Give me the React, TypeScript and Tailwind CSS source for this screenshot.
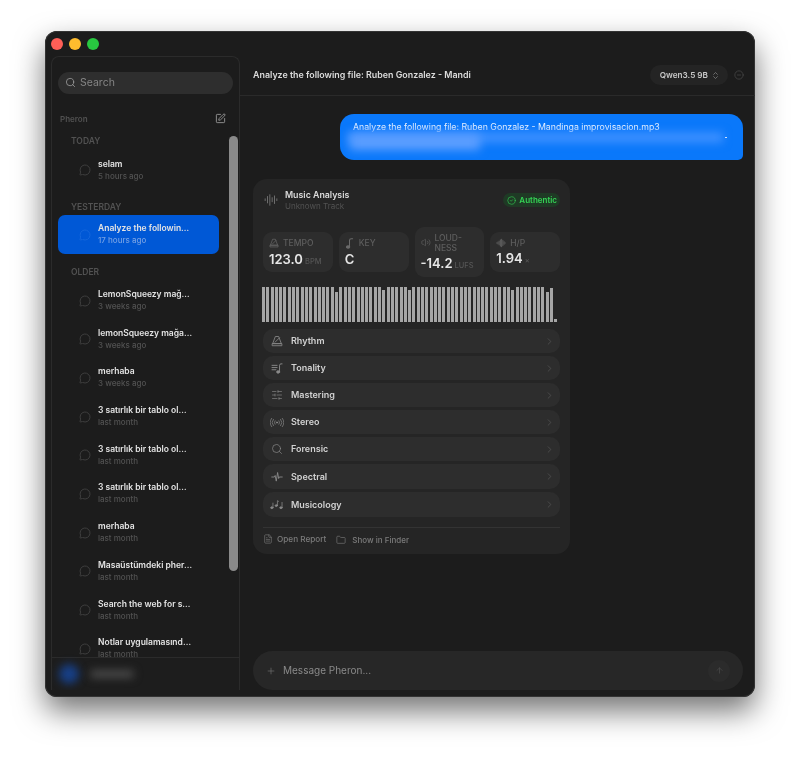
import { ArrowUp, AudioLines, ChevronRight, ChevronsUpDown, CircleCheck, CircleMinus, FileText, Folder, MessageCircle, Plus, Search, SlidersHorizontal, SquarePen, Volume2 } from "lucide-react"
import type { ReactNode } from "react"

const font = { fontFamily: 'Inter, "Noto Sans", sans-serif' }

type Chat = { title: string; time: string; active?: boolean }

const today: Chat[] = [{ title: "selam", time: "5 hours ago" }]
const yesterday: Chat[] = [{ title: "Analyze the followin…", time: "17 hours ago", active: true }]
const older: Chat[] = [
  { title: "LemonSqueezy mağ…", time: "3 weeks ago" },
  { title: "lemonSqueezy mağa…", time: "3 weeks ago" },
  { title: "merhaba", time: "3 weeks ago" },
  { title: "3 satırlık bir tablo ol…", time: "last month" },
  { title: "3 satırlık bir tablo ol…", time: "last month" },
  { title: "3 satırlık bir tablo ol…", time: "last month" },
  { title: "merhaba", time: "last month" },
  { title: "Masaüstümdeki pher…", time: "last month" },
  { title: "Search the web for s…", time: "last month" },
  { title: "Notlar uygulamasınd…", time: "last month" },
]

const dips: Record<number, number> = { 17: 30, 28: 32, 34: 32, 58: 32, 66: 30, 67: 34, 68: 3 }
const bars = Array.from({ length: 69 }, (_, i) => dips[i] ?? 35)

function Metronome() {
  return (
    <svg viewBox="0 0 16 16" className="h-[12px] w-[12px]" fill="none" stroke="currentColor" strokeWidth="1.1" strokeLinejoin="round">
      <path d="M5.8 2h4.4l3.6 9.5H2.2z" />
      <path d="M1.5 11.5h13v2.8h-13z" />
      <path d="M5 10l6.5-6.5" />
    </svg>
  )
}

function Tonality() {
  return (
    <svg viewBox="0 0 16 14" className="h-[11px] w-[13px]" fill="none" stroke="currentColor" strokeWidth="1.2" strokeLinecap="round">
      <path d="M1 3h6.5M1 5.8h6.5M1 8.6h5" />
      <ellipse cx="8.8" cy="11.4" rx="1.9" ry="1.5" fill="currentColor" />
      <path d="M10.6 11V2.8c0-1 .8-1.7 1.8-1.7h1.4" />
    </svg>
  )
}

function Stereo() {
  return (
    <svg viewBox="0 0 20 14" className="h-[11px] w-[14px]" fill="none" stroke="currentColor" strokeWidth="1" strokeLinecap="round">
      <circle cx="10" cy="7" r="0.9" fill="currentColor" />
      <path d="M7.2 4.5a4 4 0 0 0 0 5M12.8 4.5a4 4 0 0 1 0 5" />
      <path d="M4.8 2.5a7 7 0 0 0 0 9M15.2 2.5a7 7 0 0 1 0 9" />
      <path d="M2.4 1a10 10 0 0 0 0 12M17.6 1a10 10 0 0 1 0 12" />
    </svg>
  )
}

function Spike() {
  return (
    <svg viewBox="0 0 16 16" className="h-[12px] w-[12px]" fill="none" stroke="currentColor" strokeWidth="1.2" strokeLinecap="round" strokeLinejoin="round">
      <path d="M1 8h3.5l1-2 1.5 7.5L8.8 2l1.4 8 .8-2H15" />
    </svg>
  )
}

function Notes() {
  return (
    <svg viewBox="0 0 20 14" className="h-[11px] w-[14px]" fill="none" stroke="currentColor" strokeWidth="1.1" strokeLinecap="round">
      <ellipse cx="2.6" cy="11.6" rx="1.7" ry="1.3" fill="currentColor" />
      <path d="M4.2 11.4V5" />
      <ellipse cx="9" cy="8.6" rx="1.7" ry="1.3" fill="currentColor" />
      <path d="M10.6 8.4V1.5l1.6 1" />
      <ellipse cx="15.6" cy="11.6" rx="1.7" ry="1.3" fill="currentColor" />
      <path d="M17.2 11.4V4" />
    </svg>
  )
}

function KeyNote() {
  return (
    <svg viewBox="0 0 10 14" className="h-[11px] w-[9px]" fill="none" stroke="currentColor" strokeWidth="1.3" strokeLinecap="round">
      <ellipse cx="3.2" cy="11.4" rx="2.1" ry="1.6" fill="currentColor" />
      <path d="M5 11V3.2c0-1.3.9-2.2 2.2-2.2H9" />
    </svg>
  )
}

function Blob() {
  return (
    <svg viewBox="0 0 16 14" className="h-[10px] w-[12px]" fill="none" stroke="currentColor" strokeWidth="1.3" strokeLinecap="round">
      <path d="M1 7h0M3 5.5v3M5 4v6M7 2v10M9 1v12M11 3v8M13 5v4M15 7h0" />
    </svg>
  )
}

const rows: { label: string; icon: ReactNode; tall?: boolean }[] = [
  { label: "Rhythm", icon: <Metronome /> },
  { label: "Tonality", icon: <Tonality /> },
  { label: "Mastering", icon: <SlidersHorizontal className="h-[12px] w-[12px]" strokeWidth={1.3} /> },
  { label: "Stereo", icon: <Stereo /> },
  { label: "Forensic", icon: <Search className="h-[12px] w-[12px]" strokeWidth={1.4} /> },
  { label: "Spectral", icon: <Spike />, tall: true },
  { label: "Musicology", icon: <Notes />, tall: true },
]

function ChatItem({ chat }: { chat: Chat }) {
  return (
    <div className={`flex w-[161px] shrink-0 items-center gap-[7px] rounded-[7px] pl-[21px] ${chat.active ? "h-[39px] bg-[#0058d6]" : "h-[38.7px]"}`}>
      <MessageCircle className={`mt-[1px] h-[12px] w-[12px] shrink-0 ${chat.active ? "text-[#1f70e0]" : "text-[#505050]"}`} strokeWidth={1.3} />
      <div className="min-w-0 whitespace-nowrap">
        <div className="text-[8.5px] leading-[12px] font-semibold text-[#e4e4e4]">{chat.title}</div>
        <div className={`text-[8px] leading-[12px] font-medium ${chat.active ? "text-[#74a0e4]" : "text-[#525252]"}`}>{chat.time}</div>
      </div>
    </div>
  )
}

function SectionLabel({ text }: { text: string }) {
  return <div className="flex h-[14px] shrink-0 items-center pl-[13px] text-[8.5px] font-semibold text-[#525252]">{text}</div>
}

function Sidebar() {
  return (
    <div className="flex w-[195px] shrink-0 flex-col pl-[6px]">
      <div className="flex h-[25px] shrink-0 items-center gap-[6px]">
        <span className="h-[12px] w-[12px] rounded-full bg-[#ff5f57]" />
        <span className="h-[12px] w-[12px] rounded-full bg-[#febc2e]" />
        <span className="h-[12px] w-[12px] rounded-full bg-[#28c840]" />
      </div>
      <div className="relative mb-[7px] flex min-h-0 flex-1 flex-col overflow-hidden rounded-t-[8px] border border-b-0 border-[#2b2b2b] bg-[#1c1c1c]">
        <div className="mx-[6px] mt-[14.5px] flex h-[22px] shrink-0 items-center gap-[4px] rounded-full bg-[#2e2e2e] pl-[7px]">
          <Search className="h-[11px] w-[11px] text-[#a8a8a8]" strokeWidth={1.6} />
          <span className="text-[10.5px] text-[#858585]">Search</span>
        </div>
        <div className="mt-[18px] flex h-[14px] shrink-0 items-center justify-between pr-[13px] pl-[8px]">
          <span className="text-[8px] font-semibold text-[#525252]">Pheron</span>
          <SquarePen className="h-[11px] w-[11px] text-[#bdbdbd]" strokeWidth={1.5} />
        </div>
        <div className="mt-[9px] flex min-h-0 flex-1 flex-col overflow-hidden pl-[6px]">
          <SectionLabel text="TODAY" />
          <div className="mt-[2px]"><ChatItem chat={today[0]} /></div>
          <div className="mt-[11.5px]"><SectionLabel text="YESTERDAY" /></div>
          <ChatItem chat={yesterday[0]} />
          <div className="mt-[12px]"><SectionLabel text="OLDER" /></div>
          <div className="mt-[1px] flex flex-col">
            {older.map((chat, i) => (
              <ChatItem key={i} chat={chat} />
            ))}
          </div>
        </div>
        <div className="flex h-[33px] shrink-0 items-center border-t border-[#2b2b2b] bg-[#1d1d1d] pl-[7px]">
          <span className="h-[20px] w-[20px] rounded-full bg-[#173f86] blur-[4px]" />
          <span className="ml-[11px] h-[8px] w-[44px] rounded bg-[#4a4a4a] blur-[4px]" />
        </div>
        <div className="absolute top-[79px] right-[1px] h-[435px] w-[9px] rounded-full bg-[#8a8a8a]" />
      </div>
    </div>
  )
}

function Stat({ icon, label, value, unit, tall }: { icon: ReactNode; label: ReactNode; value: string; unit: string; tall?: boolean }) {
  return (
    <div className={`flex flex-col justify-center rounded-[9px] bg-[#2d2d2d] pl-[6px] ${tall ? "h-[50px]" : "h-[40px]"}`}>
      <div className="flex items-center gap-[4px] text-[#5e5e5e]">
        <span className="flex w-[10px] justify-center text-[#6a6a6a]">{icon}</span>
        <span className="text-[8.5px] leading-[10px] font-medium">{label}</span>
      </div>
      <div className="mt-[2px] flex items-baseline gap-[2px] whitespace-nowrap">
        <span className="text-[13px] leading-[16px] font-semibold text-[#e6e6e6]">{value}</span>
        <span className="text-[7.5px] font-medium text-[#555555]">{unit}</span>
      </div>
    </div>
  )
}

function AnalysisCard() {
  return (
    <div className="mt-[19px] flex h-[375px] w-[317px] flex-col rounded-[14px] bg-[#252525] px-[10px] pt-[9px]">
      <div className="flex h-[24px] items-center justify-between">
        <div className="flex items-center gap-[7px] pl-[1px]">
          <AudioLines className="h-[14px] w-[14px] text-[#8c8c8c]" strokeWidth={1.2} />
          <div>
            <div className="text-[8.8px] leading-[12px] font-semibold text-[#dcdcdc]">Music Analysis</div>
            <div className="text-[8px] leading-[11px] text-[#525252]">Unknown Track</div>
          </div>
        </div>
        <div className="flex h-[14px] items-center gap-[3px] rounded-full bg-[#1f3a25] pr-[3px] pl-[4px] text-[#35d455]">
          <CircleCheck className="h-[9px] w-[9px]" strokeWidth={1.6} />
          <span className="text-[8px] font-semibold">Authentic</span>
        </div>
      </div>
      <div className="mt-[15px] grid h-[50px] grid-cols-4 items-center gap-[6px]">
        <Stat icon={<Metronome />} label="TEMPO" value="123.0" unit="BPM" />
        <Stat icon={<KeyNote />} label="KEY" value="C" unit="" />
        <Stat icon={<Volume2 className="h-[11px] w-[11px]" strokeWidth={1.4} />} label={<>LOUD-<br />NESS</>} value="-14.2" unit="LUFS" tall />
        <Stat icon={<Blob />} label="H/P" value="1.94" unit="×" />
      </div>
      <div className="mt-[10px] -ml-[1px] flex h-[35px] items-end gap-[1.3px]">
        {bars.map((h, i) => (
          <span key={i} className="w-[3px] shrink-0 bg-[#a6a6a6]" style={{ height: h }} />
        ))}
      </div>
      <div className="mt-[7px] flex flex-col gap-[3px]">
        {rows.map((r) => (
          <div key={r.label} className={`flex items-center rounded-[10px] bg-[#2d2d2d] pr-[5px] pl-[7px] ${r.tall ? "h-[25px]" : "h-[24px]"}`}>
            <span className="flex w-[14px] justify-center text-[#8a8a8a]">{r.icon}</span>
            <span className="ml-[7px] flex-1 text-[9px] font-semibold text-[#d2d2d2]">{r.label}</span>
            <ChevronRight className="h-[11px] w-[11px] text-[#555555]" strokeWidth={1.6} />
          </div>
        ))}
      </div>
      <div className="mt-[10px] flex h-[24px] items-center gap-[10px] border-t border-[#333333] text-[#7c7c7c]">
        <div className="flex items-center gap-[4px]">
          <FileText className="h-[10px] w-[10px]" strokeWidth={1.5} />
          <span className="text-[8.2px] font-medium">Open Report</span>
        </div>
        <div className="flex items-center gap-[6px]">
          <Folder className="h-[10px] w-[10px]" strokeWidth={1.5} />
          <span className="text-[8px] font-medium">Show in Finder</span>
        </div>
      </div>
    </div>
  )
}

export default function App() {
  return (
    <div className="h-[757px] w-[800px] overflow-hidden bg-white pt-[31px] pl-[45px]" style={font}>
      <div className="flex h-[666px] w-[710px] overflow-hidden rounded-[12px] bg-[#1c1c1c] shadow-[inset_0_0_0_1px_#333333,0_14px_30px_rgba(0,0,0,0.55)] blur-[0.35px]">
        <Sidebar />
        <div className="flex min-w-0 flex-1 flex-col">
          <div className="flex h-[65px] shrink-0 items-end border-b border-[#2a2a2a] pr-[12px] pb-[10px] pl-[13px]">
            <div className="flex h-[20px] w-full items-center">
              <span className="flex-1 text-[8.9px] font-semibold whitespace-nowrap text-[#dcdcdc]">Analyze the following file: Ruben Gonzalez - Mandi</span>
              <div className="flex h-[20px] items-center gap-[3px] rounded-full bg-[#242424] pr-[8px] pl-[10px]">
                <span className="text-[8.2px] font-semibold text-[#c8c8c8]">Qwen3.5 9B</span>
                <ChevronsUpDown className="h-[9px] w-[9px] text-[#999999]" strokeWidth={1.6} />
              </div>
              <CircleMinus className="mr-[-1px] ml-[6px] h-[10px] w-[10px] text-[#555555]" strokeWidth={1.4} />
            </div>
          </div>
          <div className="flex min-h-0 flex-1 flex-col pr-[12px] pl-[13px]">
            <div className="relative mt-[18px] h-[46px] w-[403px] shrink-0 self-end overflow-hidden rounded-[14px] rounded-br-[5px] bg-[#0a78fa] pt-[6px] pl-[13px]">
              <div className="text-[8.75px] leading-[14px] whitespace-nowrap text-[#f0f6ff]">Analyze the following file: Ruben Gonzalez - Mandinga improvisacion.mp3</div>
              <div className="absolute top-[18px] left-[8px] h-[11px] w-[375px] bg-[#3b8fff] blur-[4px]" />
              <div className="absolute top-[20px] left-[10px] h-[16px] w-[130px] bg-[#5c9eff] blur-[5px]" />
              <div className="absolute top-[23px] left-[385px] h-[1px] w-[2px] bg-[#cfe3ff]" />
            </div>
            <AnalysisCard />
          </div>
          <div className="mr-[12px] mb-[7px] ml-[13px] flex h-[39px] shrink-0 items-center rounded-full bg-[#272727] pr-[13px] pl-[13px]">
            <Plus className="h-[10px] w-[10px] text-[#6f6f6f]" strokeWidth={1.6} />
            <span className="ml-[7px] flex-1 text-[10px] text-[#8a8a8a]">Message Pheron...</span>
            <div className="flex h-[22px] w-[22px] items-center justify-center rounded-full bg-[#2b2b2b]">
              <ArrowUp className="h-[9px] w-[9px] text-[#4a4a4a]" strokeWidth={2} />
            </div>
          </div>
        </div>
      </div>
    </div>
  )
}
